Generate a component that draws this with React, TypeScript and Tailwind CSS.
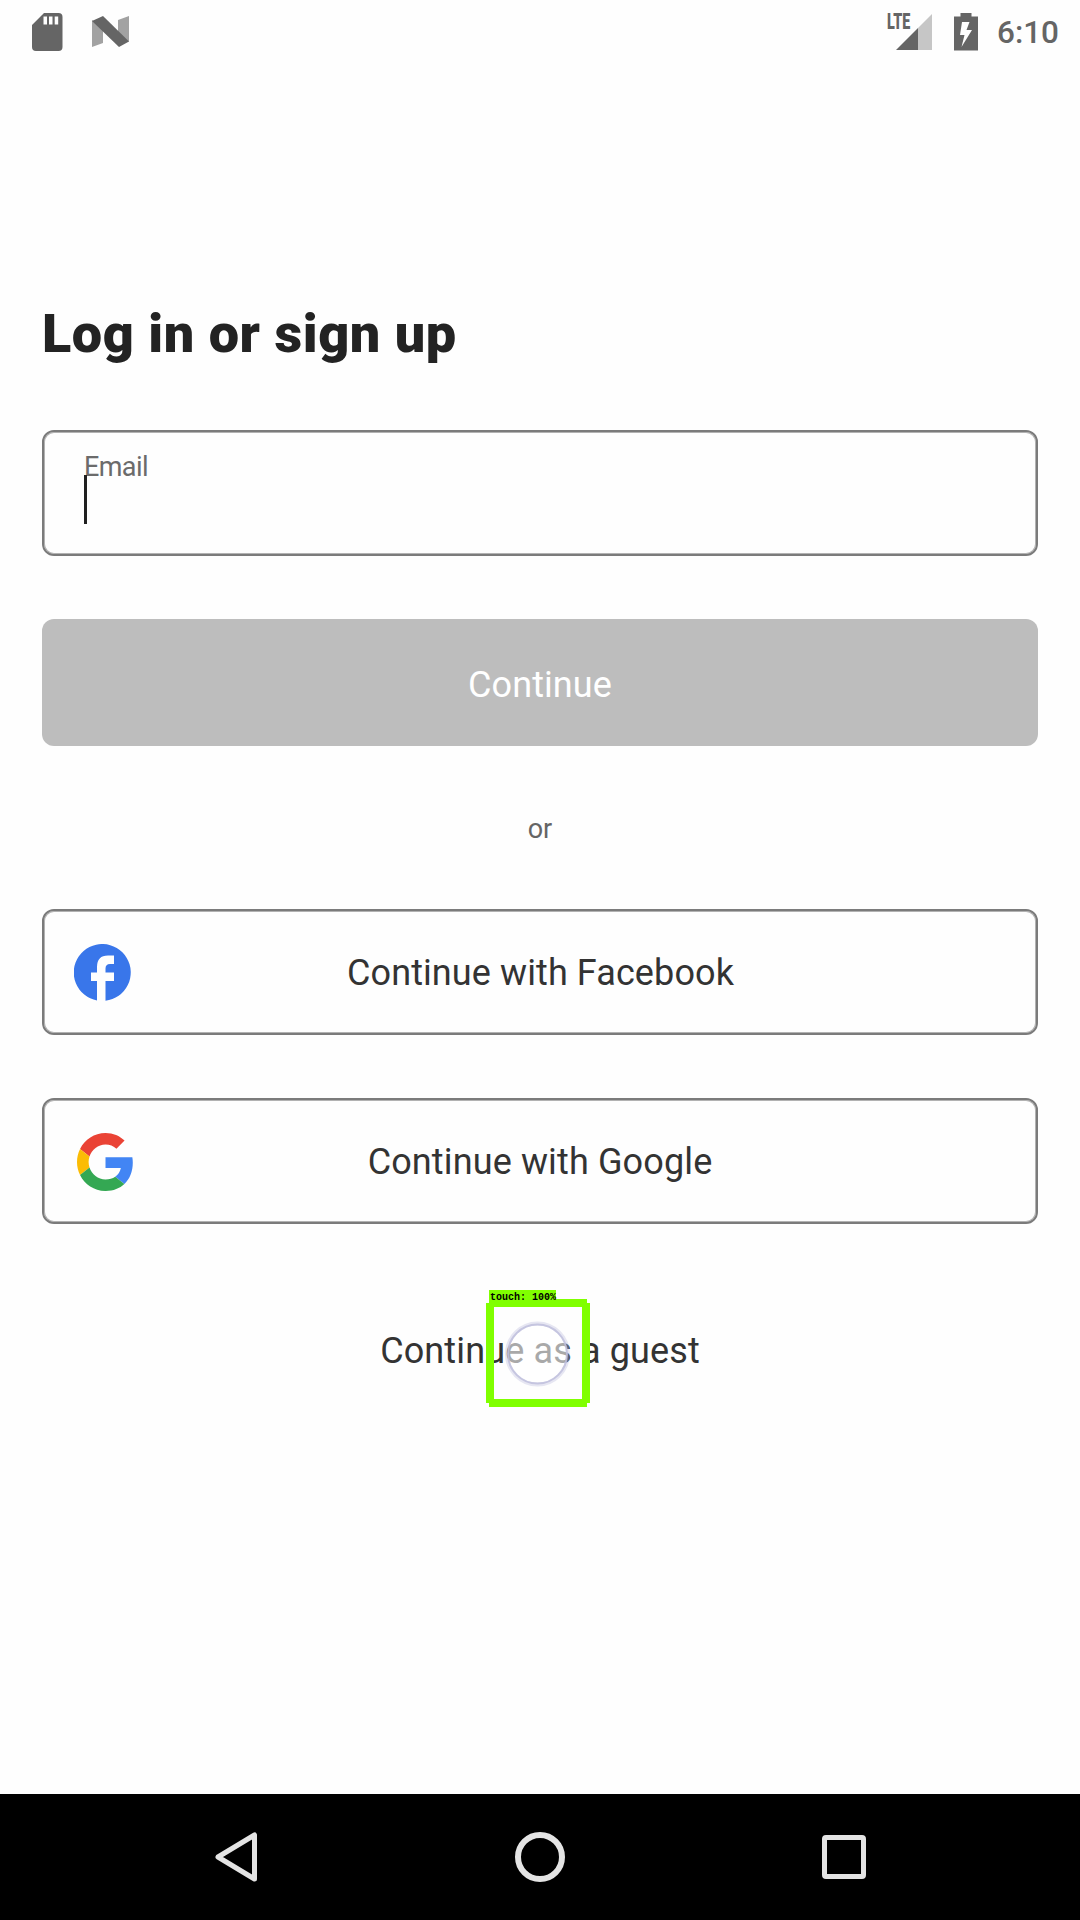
import React from "react";

const outline =
  "flex h-[126px] w-full items-center rounded-[12px] border-2 border-[#7b7b7b] shadow-[inset_0_0_0_1px_#b2b2b2]";

function SdCardIcon() {
  return (
    <svg width="31" height="38" viewBox="0 0 31 38" fill="none">
      <path
        fillRule="evenodd"
        fill="#656565"
        d="M12 0H26.500Q30.500 0 30.500 4V34Q30.500 38 26.500 38H4Q0 38 0 34V12ZM11.500 3.500V11.500H15V3.500ZM17 3.500V11.500H20.500V3.500ZM22.700 3.500V11.500H26.200V3.500Z"
      />
    </svg>
  );
}

function NougatIcon() {
  return (
    <svg width="37" height="31" viewBox="0 0 37 31">
      <path fill="#a2a2a2" d="M0 4L11 12V27L0 31ZM26 4L37 0V26L26 18Z" />
      <path fill="#656565" d="M0 5L11 0L37 25.500L27 31Z" />
    </svg>
  );
}

function SignalIcon() {
  return (
    <div className="relative h-[36px] w-[36px]">
      <svg width="36" height="36" viewBox="0 0 36 36">
        <path fill="#c6c6c6" d="M36 0V36H22V14Z" />
        <path fill="#656565" d="M22 14V36H0Z" />
      </svg>
      <span className="absolute -left-[9px] -top-[3px] origin-left scale-x-[0.65] text-[22px] font-black leading-[22px] text-[#656565]">
        LTE
      </span>
    </div>
  );
}

function BatteryIcon() {
  return (
    <svg width="24" height="38" viewBox="0 0 24 38">
      <path
        fillRule="evenodd"
        fill="#656565"
        d="M6.500 0H17.500V3.500H24V37.500H0V3.500H6.500ZM8 9L6 22H10.500L7.500 34L18 17H12.500L15.500 9Z"
      />
    </svg>
  );
}

function FacebookIcon() {
  return (
    <svg width="57" height="57" viewBox="0 0 57 57">
      <path
        fill="#3976ea"
        d="M23 56.500A28.500 28.500 0 1 1 31.500 56.800V37H40V28.500H31.500V24.500Q31.500 20 36 20H40V11.500H34Q23 11.500 23 23V28.500H17V37H23Z"
      />
    </svg>
  );
}

function GoogleIcon() {
  return (
    <svg width="57" height="58" viewBox="2 2 44 44" preserveAspectRatio="none">
      <path fill="#ea4335" d="M24 9.500c3.540 0 6.710 1.220 9.210 3.600l6.850-6.850C35.900 2.380 30.470 0 24 0 14.620 0 6.510 5.380 2.560 13.220l7.980 6.190C12.430 13.720 17.740 9.500 24 9.500z" transform="translate(2 2) scale(.9167)" />
      <path fill="#4285f4" d="M46.980 24.550c0-1.570-.15-3.090-.38-4.550H24v9.020h12.940c-.58 2.960-2.260 5.480-4.780 7.180l7.730 6c4.510-4.180 7.090-10.360 7.090-17.650z" transform="translate(2 2) scale(.9167)" />
      <path fill="#fbbc05" d="M10.530 28.590c-.48-1.450-.76-2.990-.76-4.590s.27-3.140.76-4.590l-7.980-6.190C.92 16.460 0 20.120 0 24c0 3.880.92 7.540 2.560 10.780l7.970-6.190z" transform="translate(2 2) scale(.9167)" />
      <path fill="#34a853" d="M24 48c6.480 0 11.930-2.130 15.890-5.810l-7.730-6c-2.150 1.450-4.920 2.300-8.160 2.300-6.260 0-11.570-4.220-13.470-9.910l-7.980 6.190C6.510 42.620 14.620 48 24 48z" transform="translate(2 2) scale(.9167)" />
    </svg>
  );
}

function TouchMarker() {
  return (
    <div className="absolute left-[486px] top-[44px] h-[117px] w-[104px]">
      <svg className="absolute left-0 top-[9px]" width="104" height="108" viewBox="0 0 104 108">
        <circle cx="51.500" cy="55" r="30" fill="#fff" fillOpacity=".58" />
        <circle cx="51.500" cy="55" r="30.500" fill="none" stroke="#b9b9dd" strokeOpacity=".35" strokeWidth="4" />
        <circle cx="51.500" cy="55" r="29.500" fill="none" stroke="#bdbddb" strokeOpacity=".8" strokeWidth="2" />
        <path
          fillRule="evenodd"
          fill="#80ff00"
          d="M3 0H101V4H104V104H101V108H3V104H0V4H3ZM8 8V100H96V8Z"
        />
      </svg>
      <div className="absolute left-[3px] top-0 h-[12px] w-[67px] bg-[#80ff00]">
        <span className="block whitespace-pre pl-px font-['Liberation_Mono',monospace] text-[10px] font-bold leading-[16px] text-black">
          touch: 100%
        </span>
      </div>
    </div>
  );
}

export default function App() {
  return (
    <div className="flex h-[1920px] w-[1080px] flex-col overflow-hidden bg-[#fefefe] font-[Roboto,sans-serif] text-[#333]">
      <header className="flex h-[63px] items-center justify-between pl-[32px] pr-[22px]">
        <div className="flex items-center gap-[29px]">
          <SdCardIcon />
          <NougatIcon />
        </div>
        <div className="flex items-center">
          <SignalIcon />
          <div className="ml-[22px]">
            <BatteryIcon />
          </div>
          <span className="ml-[19px] w-[61px] whitespace-nowrap pt-[2px] text-[31.500px] font-medium leading-[38px] text-[#656565]">
            6:10
          </span>
        </div>
      </header>

      <main className="relative flex flex-1 flex-col px-[42px] pt-[239px]">
        <h1 className="h-[128px] whitespace-nowrap text-[54px] font-black leading-[64px] tracking-[0.54px] text-[#232323]">
          Log in or sign up
        </h1>
        <label className={outline + " flex-col !items-start pl-[40px] pt-[18px]"}>
          <span className="h-[25px] text-[27px] leading-[34px] tracking-[-0.6px] text-[#6b6b6b]">Email</span>
          <span className="z-10 h-[49px] w-[3px] bg-[#202020]" />
        </label>
        <button className="mt-[63px] h-[127px] w-full rounded-[12px] bg-[#bdbdbd] pt-[5px] text-[36px] tracking-[0.1px] text-white">
          Continue
        </button>
        <p className="flex h-[163px] items-center justify-center pt-[4px] text-[27px] text-[#656565]">or</p>
        <button className={outline + " relative justify-center pl-px pt-[2px] text-[36px] tracking-[0.1px]"}>
          <span className="absolute left-[30px] top-[33px]">
            <FacebookIcon />
          </span>
          Continue with Facebook
        </button>
        <button className={outline + " relative mt-[63px] justify-center pt-[2px] text-[36px] tracking-[0.13px]"}>
          <span className="absolute left-[33px] top-[33px]">
            <GoogleIcon />
          </span>
          Continue with Google
        </button>
        <button className="mt-[63px] h-[126px] w-full pt-[2px] text-[36px] tracking-[0.13px]">Continue as a guest</button>
        <div className="absolute left-0 top-[1183px]">
          <TouchMarker />
        </div>
      </main>

      <nav className="flex h-[126px] items-center justify-center bg-black">
        <div className="flex w-[304px] justify-center">
          <svg width="42" height="50" viewBox="0 0 42 50">
            <path d="M39.500 3V47L3 25Z" fill="none" stroke="#e4e4e4" strokeWidth="5" strokeLinejoin="round" />
          </svg>
        </div>
        <div className="flex w-[304px] justify-center">
          <div className="size-[50px] rounded-full border-[6px] border-[#e4e4e4]" />
        </div>
        <div className="flex w-[304px] justify-center">
          <div className="size-[44px] rounded-[4px] border-[5px] border-[#e4e4e4]" />
        </div>
      </nav>
    </div>
  );
}
